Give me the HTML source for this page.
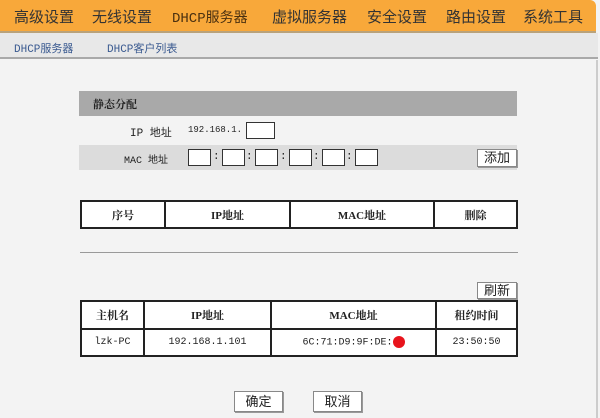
<!DOCTYPE html>
<html><head><meta charset="utf-8"><style>
*{margin:0;padding:0;box-sizing:border-box}
body{width:600px;height:418px;overflow:hidden;background:#f3f3f3;font-family:"Liberation Mono","Noto Sans CJK SC",monospace;font-size:11px;color:#222;position:relative}
.a{position:absolute}
.nav{left:0;top:0;width:596px;height:33px;background:#f8a83a;border-radius:0 6px 0 0;border-bottom:2px solid #b9a27a}
.nav span{position:absolute;top:6px;font-family:"Liberation Sans","Noto Sans CJK SC",sans-serif;font-size:15px;color:#333}
.sub{left:0;top:33px;width:598px;height:26px;background:#e8e8e8;border-bottom:2px solid #a9a9a9}
.sub span{position:absolute;top:7px;font-size:11px;color:#3a5a90}
.bar{left:79px;top:91px;width:438px;height:25px;background:#a9a9a9}
.inp{position:absolute;height:17px;background:#fff;border:1px solid #333}
table{position:absolute;border-collapse:collapse;background:#fff}
td{border:2px solid #222;text-align:center;font-size:10px}
th{border:2px solid #222;font-weight:bold;font-size:11px;font-family:"Liberation Serif","Noto Serif CJK SC",serif}
.btn{position:absolute;background:#fff;border:1px solid #888;box-shadow:1px 1px 0 #999;text-align:center;font-family:"Liberation Sans","Noto Sans CJK SC",sans-serif;font-size:13px;line-height:19px}
</style></head><body>
<div class="a nav">
<span style="left:14px">高级设置</span><span style="left:92px">无线设置</span><span style="left:172px;color:#4a3010;font-family:'Liberation Mono','Noto Sans CJK SC',monospace;font-size:14px;top:7px">DHCP服务器</span><span style="left:272px">虚拟服务器</span><span style="left:367px">安全设置</span><span style="left:446px">路由设置</span><span style="left:523px">系统工具</span>
</div>
<div class="a" style="left:189px;top:33px;width:0;height:0;border-left:8px solid transparent;border-right:8px solid transparent;border-top:7px solid #999"></div>
<div class="a sub"><span style="left:14px">DHCP服务器</span><span style="left:107px">DHCP客户列表</span></div>
<div class="a" style="left:596px;top:60px;width:2px;height:358px;background:#ccc"></div>
<div class="a bar"><span class="a" style="left:14px;top:5px;font-weight:bold;font-size:11px;font-family:'Liberation Serif','Noto Serif CJK SC',serif">静态分配</span></div>
<span class="a" style="left:130px;top:124px">IP 地址</span>
<span class="a" style="left:188px;top:125px;font-size:9px">192.168.1.</span>
<div class="inp" style="left:246px;top:122px;width:29px"></div>
<div class="a" style="left:79px;top:145px;width:438px;height:25px;background:#dcdcdc"></div>
<span class="a" style="left:124px;top:151px;font-size:10px">MAC 地址</span>
<div class="inp" style="left:188px;top:149px;width:23px"></div>
<div class="inp" style="left:222px;top:149px;width:23px"></div>
<div class="inp" style="left:255px;top:149px;width:23px"></div>
<div class="inp" style="left:289px;top:149px;width:23px"></div>
<div class="inp" style="left:322px;top:149px;width:23px"></div>
<div class="inp" style="left:355px;top:149px;width:23px"></div>
<span class="a" style="left:213px;top:151px">:</span><span class="a" style="left:246px;top:151px">:</span><span class="a" style="left:280px;top:151px">:</span><span class="a" style="left:313px;top:151px">:</span><span class="a" style="left:346px;top:151px">:</span>
<div class="btn" style="left:477px;top:149px;width:40px;height:18px;line-height:16px">添加</div>
<table style="left:80px;top:200px;width:438px;height:29px"><tr><th style="width:84px">序号</th><th style="width:125px">IP地址</th><th style="width:144px">MAC地址</th><th>删除</th></tr></table>
<div class="a" style="left:80px;top:252px;width:438px;height:1px;background:#999"></div>
<div class="btn" style="left:477px;top:282px;width:40px;height:17px;line-height:15px">刷新</div>
<table style="left:80px;top:300px;width:438px;height:57px"><tr style="height:28px"><th style="width:63px">主机名</th><th style="width:127px">IP地址</th><th style="width:165px">MAC地址</th><th>租约时间</th></tr>
<tr><td>lzk-PC</td><td>192.168.1.101</td><td>6C:71:D9:9F:DE:<span style="display:inline-block;width:12px;height:12px;border-radius:50%;background:#e8141c;vertical-align:middle"></span></td><td>23:50:50</td></tr></table>
<div class="btn" style="left:234px;top:391px;width:49px;height:21px">确定</div>
<div class="btn" style="left:313px;top:391px;width:49px;height:21px">取消</div>
</body></html>
